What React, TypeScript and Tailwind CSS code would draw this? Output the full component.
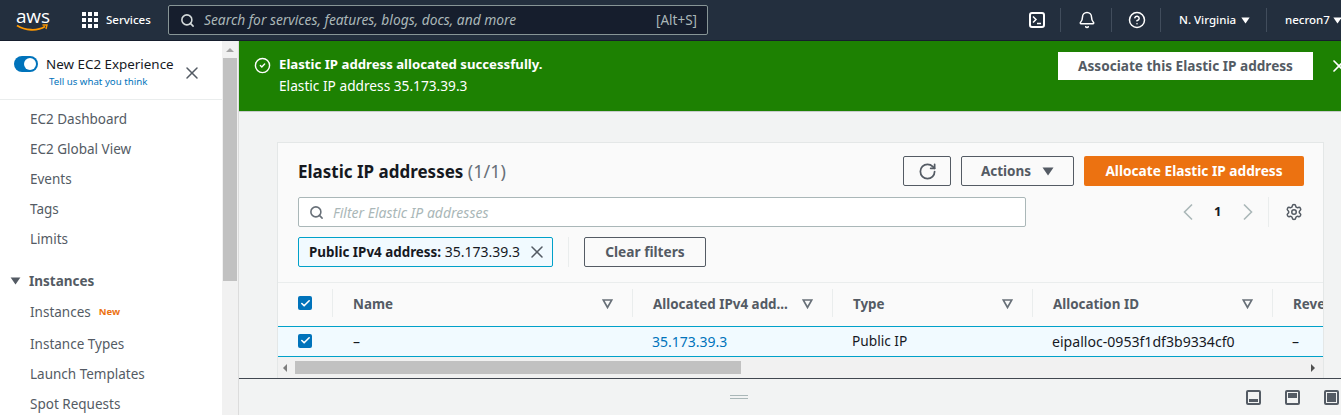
import React from "react";
import { Search, X, RotateCw, Settings, Bell, CircleHelp, CircleCheck, Check } from "lucide-react";

function Tri({ className }: { className: string }) {
  return (
    <svg viewBox="0 0 12 9" className={className}>
      <path d="M0.5 0.5h11L6 8.5z" fill="currentColor" />
    </svg>
  );
}

function FilterTri() {
  return (
    <svg viewBox="0 0 11 10" className="w-[11px] h-[10px] shrink-0 text-[#687078]">
      <path d="M1.2 1h8.6L5.500 8.500z" fill="none" stroke="currentColor" strokeWidth="1.7" />
    </svg>
  );
}

function Box() {
  return (
    <span className="w-[14px] h-[14px] rounded-[2px] bg-[#0073bb] flex items-center justify-center">
      <Check className="w-[11px] h-[11px] text-white" strokeWidth={3.5} />
    </span>
  );
}

function Sep() {
  return <span className="block w-px h-[24px] bg-[#414d5c]" />;
}

function Chev({ d }: { d: string }) {
  return (
    <svg viewBox="0 0 12 18" className="w-[12px] h-[18px] shrink-0 text-[#aab7b8]">
      <path d={d} fill="none" stroke="currentColor" strokeWidth="1.6" />
    </svg>
  );
}

function Panel({ fill }: { fill: string }) {
  return (
    <svg viewBox="0 0 15 15" className="w-[15px] h-[15px] shrink-0">
      <rect x="1" y="1" width="13" height="13" rx="1" fill="none" stroke="#545b64" strokeWidth="2" />
      {fill === "bottom" && <rect x="3" y="9" width="9" height="3" fill="#545b64" />}
      {fill === "top" && <rect x="3" y="3" width="9" height="5" fill="#545b64" />}
      {fill === "full" && <rect x="3" y="3" width="9" height="9" fill="#545b64" />}
    </svg>
  );
}

const nav1 = ["EC2 Dashboard", "EC2 Global View", "Events", "Tags", "Limits"];

export default function App() {
  return (
    <div className="w-[1341px] h-[415px] overflow-hidden flex flex-col bg-[#f2f3f3] text-[14px] text-[#16191f] font-['Noto_Sans','Open_Sans',sans-serif]">
      {/* top bar */}
      <header className="h-[41px] shrink-0 bg-[#232f3e] border-b border-[#161e2d] flex items-center text-white text-[11.5px]">
        <div className="w-[64px] pl-[16px] flex flex-col items-start shrink-0">
          <span className="text-[19px] leading-[15px] tracking-[-0.2px] font-['Open_Sans',sans-serif]">aws</span>
          <svg viewBox="0 0 32 8" className="w-[32px] h-[8px]">
            <path d="M1 1.500c8 5 20 6 28 1" fill="none" stroke="#f90" strokeWidth="1.8" />
            <path d="M26.500 1h4.500l-1 4" fill="none" stroke="#f90" strokeWidth="1.4" />
          </svg>
        </div>
        <Sep />
        <div className="ml-[18px] w-[16px] h-[16px] grid grid-cols-3 gap-[2px] shrink-0">
          {Array.from({ length: 9 }).map((_, i) => (
            <span key={i} className="bg-white" />
          ))}
        </div>
        <span className="ml-[8px] w-[62px] font-medium shrink-0">Services</span>
        <div className="w-[540px] h-[30px] shrink-0 bg-[#161e2d] border border-[#879596] rounded-[2px] flex items-center pl-[11px] pr-[10px]">
          <Search className="w-[15px] h-[15px] text-[#d5dbdb]" strokeWidth={2.5} />
          <span className="ml-[9px] flex-1 italic text-[#aab7b8] text-[13.8px] whitespace-nowrap">Search for services, features, blogs, docs, and more</span>
          <span className="text-[#aab7b8] text-[13.5px]">[Alt+S]</span>
        </div>
        <div className="ml-[321px] w-[16px] h-[16px] shrink-0 border-2 border-white rounded-[3px] flex items-center pl-[1px]">
          <svg viewBox="0 0 10 10" className="w-[10px] h-[10px]">
            <path d="M1 1.500l3 3-3 3M5 8.500h4" fill="none" stroke="white" strokeWidth="1.500" />
          </svg>
        </div>
        <span className="ml-[15px]"><Sep /></span>
        <Bell className="ml-[17px] w-[18px] h-[18px] shrink-0" strokeWidth={2} />
        <span className="ml-[15px]"><Sep /></span>
        <CircleHelp className="ml-[16px] w-[18px] h-[18px] shrink-0" strokeWidth={2} />
        <span className="ml-[14px]"><Sep /></span>
        <span className="ml-[18px] w-[59px] whitespace-nowrap font-medium shrink-0">N. Virginia</span>
        <Tri className="w-[9px] h-[7px] ml-[3px] shrink-0" />
        <span className="ml-[16px]"><Sep /></span>
        <span className="ml-[18px] w-[48px] whitespace-nowrap font-medium shrink-0">necron7</span>
        <Tri className="w-[9px] h-[7px] shrink-0" />
      </header>

      <div className="flex-1 min-h-0 flex">
        {/* sidebar */}
        <aside className="w-[222px] shrink-0 bg-white flex flex-col overflow-hidden text-[#545b64] text-[13.5px]">
          <div className="h-[59px] shrink-0 border-b border-[#eaeded] flex items-start pl-[14px] pt-[14px]">
            <span className="mt-[1px] w-[24px] h-[16px] rounded-full bg-[#0073bb] flex items-center justify-end pr-[2px] shrink-0">
              <span className="w-[12px] h-[12px] rounded-full bg-white" />
            </span>
            <div className="ml-[8px] w-[130px] flex flex-col items-start">
              <span className="text-[#16191f] text-[13.4px] leading-[18px] whitespace-nowrap">New EC2 Experience</span>
              <span className="text-[#0073bb] text-[9.7px] leading-[14px] mt-[2px] ml-[3px] whitespace-nowrap">Tell us what you think</span>
            </div>
            <X className="ml-[6px] mt-[8px] w-[20px] h-[20px] text-[#545b64]" strokeWidth={1.8} />
          </div>
          <nav className="pl-[30px] pt-[4px] flex flex-col">
            {nav1.map((t) => (
              <span key={t} className="h-[30px] leading-[30px] whitespace-nowrap">{t}</span>
            ))}
            <div className="mt-[12px] h-[30px] -ml-[20px] flex items-center">
              <Tri className="w-[11px] h-[8px] text-[#545b64]" />
              <span className="ml-[8px] font-bold">Instances</span>
            </div>
            <div className="h-[33px] pb-[1px] flex items-center">
              <span>Instances</span>
              <span className="ml-[8px] text-[9.5px] font-bold text-[#ec7211]">New</span>
            </div>
            {["Instance Types", "Launch Templates", "Spot Requests"].map((t) => (
              <span key={t} className="h-[30px] leading-[30px] whitespace-nowrap">{t}</span>
            ))}
          </nav>
        </aside>

        {/* sidebar scrollbar */}
        <div className="w-[17px] shrink-0 bg-[#f1f1f1] border-r border-[#dcdcdc] flex flex-col items-center">
          <div className="h-[17px] flex items-center justify-center">
            <span className="w-0 h-0 border-x-[4px] border-x-transparent border-b-[4px] border-b-[#a3a3a3]" />
          </div>
          <div className="w-[14px] h-[223px] bg-[#c1c1c1]" />
        </div>

        {/* main */}
        <main className="flex-1 min-w-0 flex flex-col">
          <div className="h-[71px] shrink-0 bg-[#1d8102] border-b border-[#c8cccc] flex items-start text-white pl-[15px] pt-[11px] overflow-hidden">
            <CircleCheck className="w-[17px] h-[17px] mt-[5px] shrink-0" strokeWidth={2} />
            <div className="ml-[8px] w-[779px] shrink-0 leading-[21px] pt-[2px] text-[13.7px]">
              <div className="font-bold text-[13.2px]">Elastic IP address allocated successfully.</div>
              <div>Elastic IP address 35.173.39.3</div>
            </div>
            <div className="w-[255px] h-[28px] bg-white text-[#545b64] font-bold text-[13.6px] flex items-center justify-center shrink-0">
              Associate this Elastic IP address
            </div>
            <X className="ml-[16px] mt-[4px] w-[20px] h-[20px] shrink-0" strokeWidth={2} />
          </div>

          <div className="flex-1 min-h-0 pt-[30px] pl-[38px] pr-[17px] overflow-hidden">
            <section className="h-[236px] bg-[#fafafa] border-l border-r border-t border-[#e4e7e7] overflow-hidden flex flex-col">
              <div className="h-[140px] shrink-0 border-b border-[#eaeded] pl-[20px] pr-[19px] pt-[13px] flex flex-col">
                <div className="flex items-center h-[30px]">
                  <h2 className="text-[17px] font-bold flex-1 whitespace-nowrap">
                    Elastic IP addresses <span className="font-normal text-[18px] text-[#687078]">(1/1)</span>
                  </h2>
                  <button className="w-[48px] h-[30px] border border-[#545b64] rounded-[2px] flex items-center justify-center text-[#545b64]">
                    <RotateCw className="w-[19px] h-[19px]" strokeWidth={2.2} />
                  </button>
                  <button className="ml-[10px] w-[113px] h-[30px] border border-[#545b64] rounded-[2px] flex items-center justify-center gap-[11px] text-[#545b64] font-bold text-[13.5px]">
                    Actions <Tri className="w-[12px] h-[9px]" />
                  </button>
                  <button className="ml-[10px] w-[220px] h-[30px] bg-[#ec7211] rounded-[2px] text-white font-bold text-[13.7px]">
                    Allocate Elastic IP address
                  </button>
                </div>
                <div className="mt-[11px] flex items-center h-[30px]">
                  <div className="w-[728px] h-[30px] bg-white border border-[#aab7b8] rounded-[2px] flex items-center pl-[10px]">
                    <Search className="w-[15px] h-[15px] text-[#687078]" strokeWidth={2.5} />
                    <span className="ml-[9px] italic text-[#aab7b8]">Filter Elastic IP addresses</span>
                  </div>
                  <span className="ml-[156px]"><Chev d="M10 1.500L2.500 9l7.500 7.500" /></span>
                  <span className="ml-[20px] w-[8px] font-bold text-[13px]">1</span>
                  <span className="ml-[20px]"><Chev d="M2 1.500L9.500 9 2 16.500" /></span>
                  <span className="ml-[14px] w-px h-[30px] bg-[#eaeded]" />
                  <Settings className="ml-[16px] w-[18px] h-[18px] text-[#545b64]" strokeWidth={2} />
                </div>
                <div className="mt-[10px] flex items-center h-[30px]">
                  <div className="w-[255px] h-[30px] bg-[#f1faff] border border-[#00a1c9] rounded-[2px] flex items-center pl-[10px]">
                    <span className="whitespace-nowrap text-[14px]"><b className="text-[13.4px]">Public IPv4 address:</b> 35.173.39.3</span>
                    <X className="ml-[7px] w-[20px] h-[20px] text-[#545b64]" strokeWidth={1.8} />
                  </div>
                  <span className="ml-[15px] w-px h-[30px] bg-[#eaeded]" />
                  <button className="ml-[15px] w-[122px] h-[30px] border border-[#545b64] rounded-[2px] text-[#545b64] font-bold text-[13.7px]">
                    Clear filters
                  </button>
                </div>
              </div>

              <div className="w-[1300px] flex h-[43px] shrink-0 items-start pt-[6px] text-[#545b64] font-bold text-[13.4px]">
                <div className="w-[54px] h-[28px] shrink-0 pl-[20px] flex items-center"><Box /></div>
                {[
                  ["Name", 300],
                  ["Allocated IPv4 add...", 200],
                  ["Type", 200],
                  ["Allocation ID", 240],
                ].map(([t, w]) => (
                  <div key={t as string} style={{ width: w as number }} className="shrink-0 h-[28px] border-l border-[#eaeded] pl-[20px] pr-[19px] pt-[2px] flex items-center justify-between whitespace-nowrap">
                    <span>{t}</span>
                    <FilterTri />
                  </div>
                ))}
                <div className="shrink-0 h-[28px] border-l border-[#eaeded] pl-[20px] pt-[2px] flex items-center">Reve</div>
              </div>

              <div className="w-[1300px] h-[31px] shrink-0 bg-[#f1faff] border-y border-[#00a1c9] flex items-center">
                <div className="w-[54px] shrink-0 pl-[20px] flex items-center -mt-[2px]"><Box /></div>
                <div className="w-[300px] shrink-0 pl-[21px]">–</div>
                <div className="w-[200px] shrink-0 pl-[20px] text-[#0073bb]">35.173.39.3</div>
                <div className="w-[200px] shrink-0 pl-[20px] text-[13.7px]">Public IP</div>
                <div className="w-[240px] shrink-0 pl-[20px] text-[14.1px]">eipalloc-0953f1df3b9334cf0</div>
                <div className="pl-[20px]">–</div>
              </div>

              <div className="h-[21px] shrink-0 bg-[#f1f1f1] flex items-center">
                <span className="ml-[5px] w-0 h-0 border-y-[4px] border-y-transparent border-r-[4px] border-r-[#7d7d7d]" />
                <span className="ml-[8px] w-[446px] h-[13px] bg-[#c1c1c1]" />
                <span className="ml-auto mr-[8px] w-0 h-0 border-y-[4px] border-y-transparent border-l-[4px] border-l-[#505050]" />
              </div>
            </section>
          </div>

          <div className="h-[37px] shrink-0 bg-[#f2f3f3] border-t border-[#414750] flex items-center relative">
            <span className="ml-[491px] w-[18px] h-[4px] border-y border-[#aab7b8]" />
            <div className="ml-auto flex gap-[24px] items-center mr-[2px]">
              <Panel fill="bottom" />
              <Panel fill="top" />
              <Panel fill="full" />
            </div>
          </div>
        </main>
      </div>
    </div>
  );
}
